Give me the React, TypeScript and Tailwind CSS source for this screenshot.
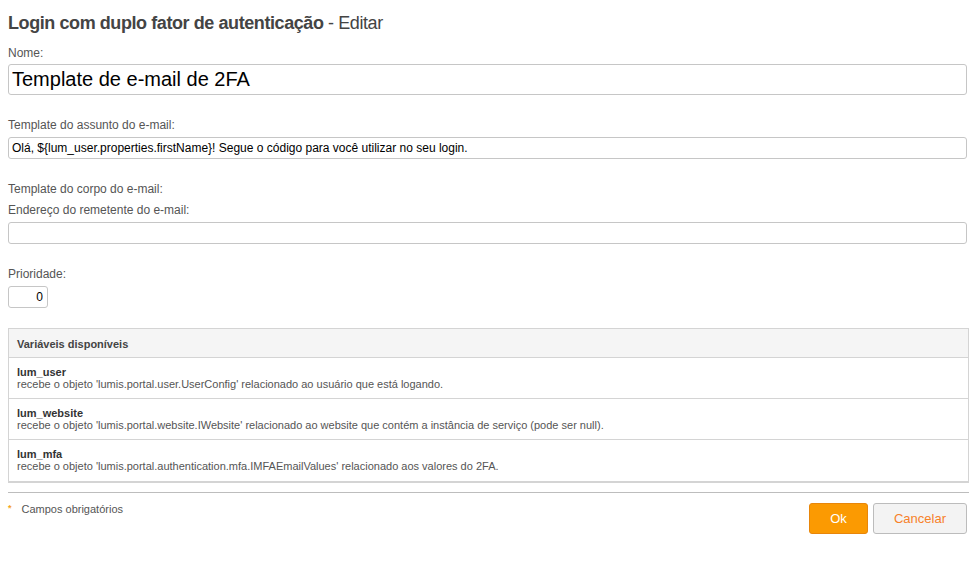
const vars = [
  { name: 'lum_user', desc: "recebe o objeto 'lumis.portal.user.UserConfig' relacionado ao usuário que está logando." },
  { name: 'lum_website', desc: "recebe o objeto 'lumis.portal.website.IWebsite' relacionado ao website que contém a instância de serviço (pode ser null)." },
  { name: 'lum_mfa', desc: "recebe o objeto 'lumis.portal.authentication.mfa.IMFAEmailValues' relacionado aos valores do 2FA." },
];

export default function App() {
  return (
    <div className="min-h-[569px] bg-white px-2 pt-[11px] text-[#444] font-['Liberation_Sans',Arial,sans-serif]">
      <h1 className="text-[18px] leading-[24px] tracking-[-0.42px]">
        <span className="font-bold">Login com duplo fator de autenticação</span>
        <span> - Editar</span>
      </h1>

      {/* Nome */}
      <div className="mt-[11px] text-[12px] leading-[14px] text-[#555]">Nome:</div>
      <input
        readOnly
        value="Template de e-mail de 2FA"
        className="mt-[4px] block h-[31px] w-[959px] rounded-[3px] border border-[#c6c6c6] px-[3px] text-[20px] text-black outline-none"
      />

      <div className="mt-[23px] text-[12px] leading-[14px] text-[#555]">Template do assunto do e-mail:</div>
      <input
        readOnly
        value="Olá, ${lum_user.properties.firstName}! Segue o código para você utilizar no seu login."
        className="mt-[5px] block h-[22px] w-[959px] rounded-[3px] border border-[#c6c6c6] px-[3px] text-[12px] text-black outline-none"
      />

      <div className="mt-[23px] text-[12px] leading-[14px] text-[#555]">Template do corpo do e-mail:</div>
      <div className="mt-[7px] text-[12px] leading-[14px] text-[#555]">Endereço do remetente do e-mail:</div>
      <input
        readOnly
        value=""
        className="mt-[5px] block h-[22px] w-[959px] rounded-[3px] border border-[#c6c6c6] px-[3px] text-[12px] text-black outline-none"
      />

      <div className="mt-[23px] text-[12px] leading-[14px] text-[#555]">Prioridade:</div>
      <input
        readOnly
        value="0"
        className="mt-[5px] block h-[22px] w-[40px] rounded-[3px] border border-[#c6c6c6] px-[4px] text-right text-[12px] text-black outline-none"
      />

      {/* Variáveis */}
      <div className="mt-[20px] w-[961px] border border-b-2 border-[#d4d4d4] text-[11px] leading-[12px]">
        <div className="h-[29px] border-b border-[#d4d4d4] bg-[#f5f5f5] px-2 pt-[9px] font-bold text-[#444]">
          Variáveis disponíveis
        </div>
        {vars.map((v, i) => (
          <div key={v.name} className={`h-[41px] px-2 pt-[8px] ${i < vars.length - 1 ? 'border-b border-[#d4d4d4]' : ''}`}>
            <div className="font-bold text-[#333]">{v.name}</div>
            <div className="text-[#555]">{v.desc}</div>
          </div>
        ))}
      </div>

      <div className="mt-[9px] w-[961px] border-t border-[#bdbdbd]" />

      <div className="flex w-[959px] items-start justify-between">
        <div className="mt-[10px] flex items-center text-[11px] leading-[12px] text-[#555]">
          <span className="mr-[10px] -translate-y-[1px] text-[9px] font-bold text-[#f5a623]">*</span>
          Campos obrigatórios
        </div>
        <div className="mt-[10px] flex gap-[5px]">
          <button className="h-[31px] w-[59px] rounded-[3px] border border-[#e8860a] bg-[#fb9a02] text-[13px] text-white">
            Ok
          </button>
          <button className="h-[31px] w-[94px] rounded-[3px] border border-[#bcbcbc] bg-[#f3f3f3] text-[13px] text-[#f7812a]">
            Cancelar
          </button>
        </div>
      </div>
    </div>
  );
}
